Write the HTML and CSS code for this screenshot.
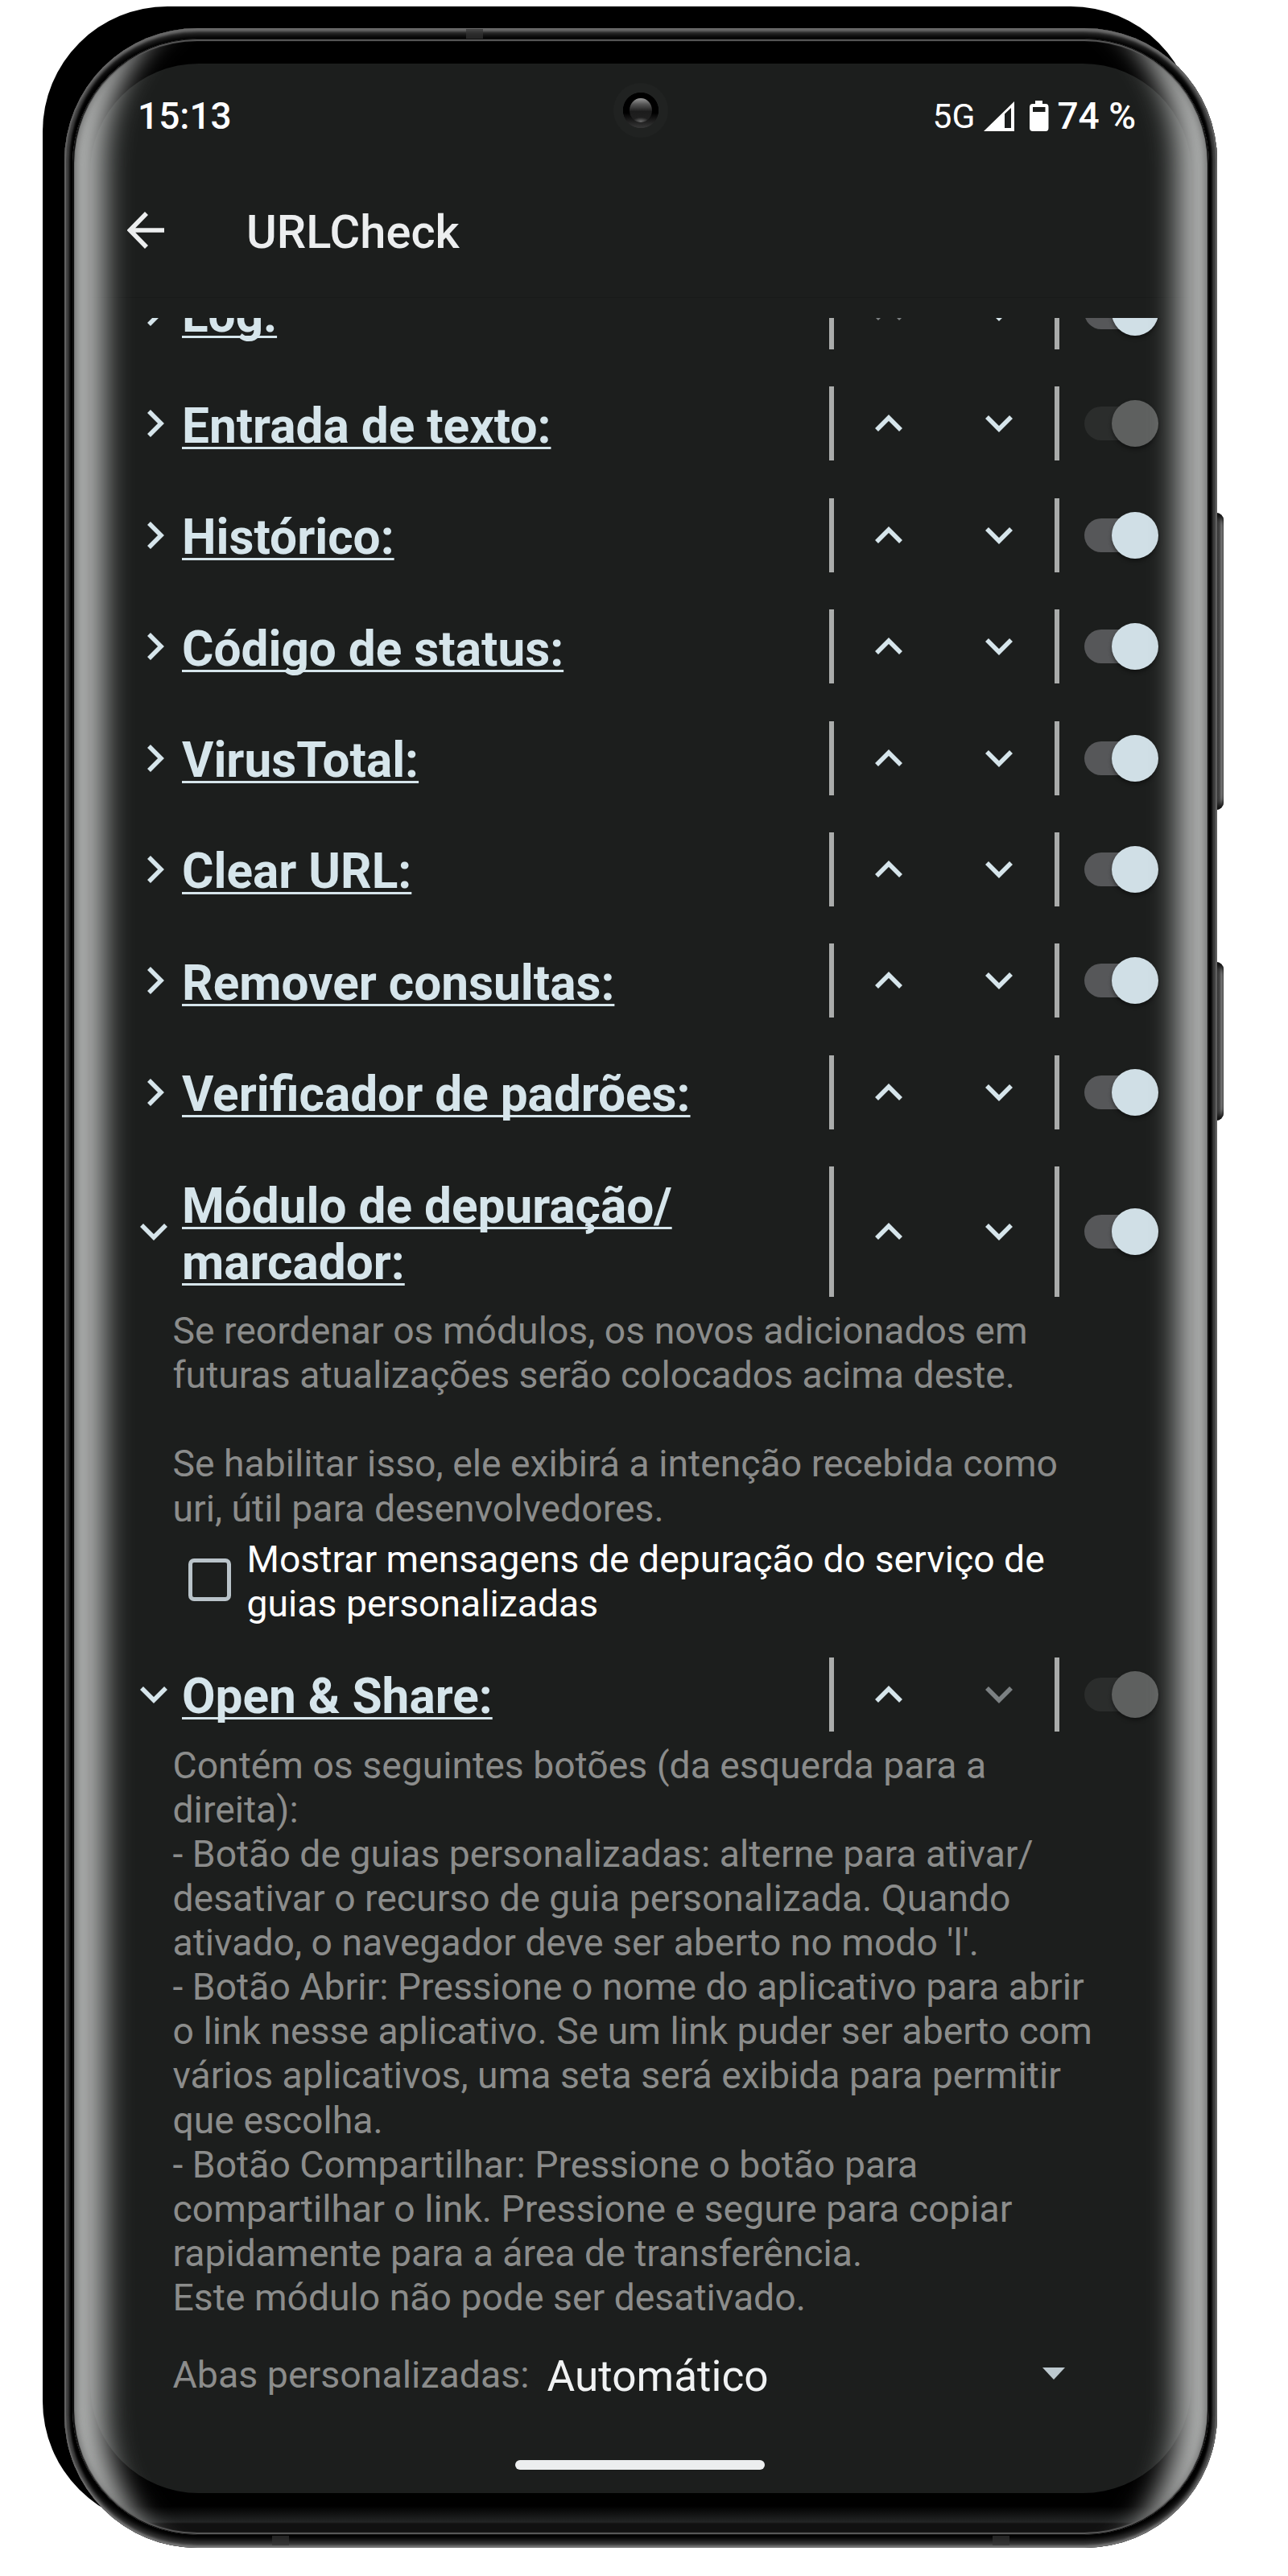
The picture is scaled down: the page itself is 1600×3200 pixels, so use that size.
FILE: index.html
```html
<!DOCTYPE html>
<html lang="pt">
<head>
<meta charset="utf-8">
<title>URLCheck</title>
<link rel="stylesheet" href="styles.css">
</head>
<body>
<svg class="defs" width="0" height="0">
  <symbol id="right" viewBox="0 0 34 34"><path d="M11 2 L26 17 L11 32" fill="none" stroke="currentColor" stroke-width="5.6"/></symbol>
  <symbol id="down" viewBox="0 0 34 22"><path d="M2 3 L17 18 L32 3" fill="none" stroke="currentColor" stroke-width="5.6"/></symbol>
  <symbol id="up" viewBox="0 0 34 22"><path d="M2 19 L17 4 L32 19" fill="none" stroke="currentColor" stroke-width="5.6"/></symbol>
</svg>
<div class="device">
  <div class="backing"></div>
  <div class="key key-volume"></div>
  <div class="key key-power"></div>
  <div class="body">
    <i class="antenna antenna-top"></i><i class="antenna antenna-bl"></i><i class="antenna antenna-br"></i>
    <div class="bezel">
      <main class="screen">
        <header class="status">
          <span class="clock">15:13</span>
          <span class="net">5G</span>
          <svg class="signal" viewBox="0 0 38 37"><path d="M0 37 L38 0 V37 Z M26 15.500 V33 H34 V8 Z" fill="#fff" fill-rule="evenodd"/></svg>
          <svg class="battery" viewBox="0 0 24 38"><path d="M7 0 H16 V4 H20 Q23.500 4 23.500 8 V34 Q23.500 38 20 38 H4 Q0 38 0 34 V8 Q0 4 4 4 H7 Z M4 8 V14 H19.500 V8 Z" fill="#fff" fill-rule="evenodd"/></svg>
          <span class="level">74 %</span>
        </header>
        <div class="appbar">
          <svg class="back" viewBox="0 0 46 46"><path d="M46 23 H4 M24 2 L3.500 23 L24 44" fill="none" stroke="#eceeef" stroke-width="5.6"/></svg>
          <h1>URLCheck</h1>
        </div>
        <div class="list">
          <div class="row"><svg class="tw"><use href="#right"/></svg><h2>Log:</h2><div class="move"><svg class="dim"><use href="#up"/></svg><svg><use href="#down"/></svg></div><span class="switch"></span></div>
          <div class="row"><svg class="tw"><use href="#right"/></svg><h2>Entrada de texto:</h2><div class="move"><svg><use href="#up"/></svg><svg><use href="#down"/></svg></div><span class="switch locked"></span></div>
          <div class="row"><svg class="tw"><use href="#right"/></svg><h2>Histórico:</h2><div class="move"><svg><use href="#up"/></svg><svg><use href="#down"/></svg></div><span class="switch"></span></div>
          <div class="row"><svg class="tw"><use href="#right"/></svg><h2>Código de status:</h2><div class="move"><svg><use href="#up"/></svg><svg><use href="#down"/></svg></div><span class="switch"></span></div>
          <div class="row"><svg class="tw"><use href="#right"/></svg><h2>VirusTotal:</h2><div class="move"><svg><use href="#up"/></svg><svg><use href="#down"/></svg></div><span class="switch"></span></div>
          <div class="row"><svg class="tw"><use href="#right"/></svg><h2>Clear URL:</h2><div class="move"><svg><use href="#up"/></svg><svg><use href="#down"/></svg></div><span class="switch"></span></div>
          <div class="row"><svg class="tw"><use href="#right"/></svg><h2>Remover consultas:</h2><div class="move"><svg><use href="#up"/></svg><svg><use href="#down"/></svg></div><span class="switch"></span></div>
          <div class="row"><svg class="tw"><use href="#right"/></svg><h2>Verificador de padrões:</h2><div class="move"><svg><use href="#up"/></svg><svg><use href="#down"/></svg></div><span class="switch"></span></div>
          <div class="row open tall"><svg class="tw"><use href="#down"/></svg><h2>Módulo de depuração/<br>marcador:</h2><div class="move"><svg><use href="#up"/></svg><svg><use href="#down"/></svg></div><span class="switch"></span></div>
          <p class="about">Se reordenar os módulos, os novos adicionados em<br>futuras atualizações serão colocados acima deste.<br><br>Se habilitar isso, ele exibirá a intenção recebida como<br>uri, útil para desenvolvedores.</p>
          <label class="option"><span class="box"></span><span>Mostrar mensagens de depuração do serviço de<br>guias personalizadas</span></label>
          <div class="row open"><svg class="tw"><use href="#down"/></svg><h2>Open &amp; Share:</h2><div class="move"><svg><use href="#up"/></svg><svg class="dim"><use href="#down"/></svg></div><span class="switch locked"></span></div>
          <p class="about">Contém os seguintes botões (da esquerda para a<br>direita):<br>- Botão de guias personalizadas: alterne para ativar/<br>desativar o recurso de guia personalizada. Quando<br>ativado, o navegador deve ser aberto no modo 'l'.<br>- Botão Abrir: Pressione o nome do aplicativo para abrir<br>o link nesse aplicativo. Se um link puder ser aberto com<br>vários aplicativos, uma seta será exibida para permitir<br>que escolha.<br>- Botão Compartilhar: Pressione o botão para<br>compartilhar o link. Pressione e segure para copiar<br>rapidamente para a área de transferência.<br>Este módulo não pode ser desativado.</p>
          <div class="select"><span class="name">Abas personalizadas:</span><span class="value">Automático</span><svg class="caret" viewBox="0 0 28 15"><path d="M0 0 H28 L14 15 Z" fill="#bdc9cf"/></svg></div>
        </div>
        <div class="home"></div>
      </main>
      <div class="camera"><span class="lens"></span></div>
      <div class="glow"></div>
    </div>
  </div>
</div>
</body>
</html>
```
FILE: styles.css
```css
* { box-sizing: border-box; }
body { margin: 0; background: #fff; font-family: Roboto, "Liberation Sans", sans-serif; }
h1, h2, p { margin: 0; }
.defs { position: absolute; }
.device { position: relative; width: 1600px; height: 3200px; overflow: hidden; padding: 35px 88px 35px 80px; }
.backing { position: absolute; left: 53px; top: 8px; width: 1432px; height: 3130px; border-radius: 155px; background: #000; }
.key { position: absolute; left: 1505px; width: 15px; border-radius: 0 9px 9px 0; background: linear-gradient(90deg, #333 40%, #444 65%, #8a8a8a 85%, #777); box-shadow: inset 0 8px 6px -2px #111, inset 0 -8px 6px -2px #111; }
.key-volume { top: 637px; height: 369px; }
.key-power { top: 1195px; height: 197px; }

.body {
  position: relative; height: 3130px; border-radius: 165px; padding: 13px 10px 16px; background: #000;
  box-shadow: inset 0 4px 3px #6a6a6a, inset 0 10px 6px -2px #333, inset 0 -3px 3px #7a7a7a, inset 0 -11px 6px -2px #3a3a3a, inset 2px 0 1px #707070, inset -2px 0 1px #707070, inset 7px 0 3px -1px #444, inset -7px 0 3px -1px #444;
}
.antenna { position: absolute; width: 21px; height: 12px; background: #333; opacity: .7; }
.antenna-top { left: 499px; top: 1px; }
.antenna-bl { left: 258px; bottom: 3px; }
.antenna-br { left: 1153px; bottom: 3px; }

.bezel {
  position: relative; height: 3101px; border-radius: 155px; overflow: hidden; padding: 31px 22px 50px;
  background: linear-gradient(#000 3065px, #232525 3085px, #111 3087px, #111);
}
.screen {
  height: 3018px; border-radius: 135px; background: #1c1e1d; overflow: hidden; color: #fff;
  display: flex; flex-direction: column;
}
.glow {
  position: absolute; inset: 0; border-radius: inherit;
  box-shadow: inset 0 0 0 1px #111, inset 0 3px 1px #5a5a5a, inset 0 -3px 1px #5a5a5a,
    inset 2px 0 1px #000, inset -2px 0 1px #000,
    inset 15px 0 10px -10px rgba(70,70,70,.6), inset -15px 0 10px -10px rgba(70,70,70,.6),
    inset 130px 0 34px -90px #adafae, inset -130px 0 34px -90px #adafae;
}

.status { display: flex; align-items: center; height: 130px; padding: 0 69px 0 59px; font-size: 46px; font-weight: 500; }
.clock { margin-right: auto; }
.net { font-size: 42.500px; font-weight: 400; margin-right: 11px; }
.signal { width: 38px; height: 37px; margin-right: 19px; }
.battery { width: 24px; height: 38px; margin-right: 10px; }

.appbar { display: flex; align-items: center; height: 161px; padding: 0 0 6px 46px; border-bottom: 1px solid #181a19; gap: 102px; }
.back { width: 46px; height: 46px; }
h1 { font-size: 57.800px; font-weight: 500; color: #eceeef; padding-top: 4px; }

.list { flex: 1; margin-top: 25px; overflow: hidden; padding-right: 29px; }
.row { display: flex; align-items: center; height: 92px; margin-bottom: 46.400px; color: #d6e5eb; padding-left: 62px; }
.row:first-child { margin-top: -53px; }
.row.tall { height: 162px; }
.row.open { margin-bottom: 0; }
.tw { width: 34px; height: 34px; margin-right: 18px; }
.open .tw { height: 22px; }
h2 { flex: 1; font-size: 60.300px; font-weight: 700; line-height: 70px; padding-top: 7px; text-decoration: underline; text-decoration-thickness: 3px; text-underline-offset: 5px; text-decoration-skip-ink: none; white-space: nowrap; }
.move { align-self: stretch; width: 286px; border: solid #aaacab; border-width: 0 6px; display: flex; align-items: center; gap: 103px; padding-left: 51px; }
.move svg { width: 34px; height: 22px; }
.dim { color: #7c8183; }
.switch { position: relative; width: 92px; height: 42px; margin-left: 31px; margin-right: 12px; flex: none; }
.switch::before { content: ""; position: absolute; inset: 0 14px 0 0; border-radius: 21px; background: #565759; }
.switch::after { content: ""; position: absolute; left: 34px; top: -8px; width: 58px; height: 58px; border-radius: 50%; background: #d0dfe6; box-shadow: 0 3px 5px rgba(0,0,0,.4); }
.locked::before { background: #2b2d2c; }
.locked::after { background: #5e605f; }
.about { padding-left: 102.500px; font-size: 46.320px; line-height: 55.100px; color: #8b8c8b; white-space: nowrap; margin-top: 15px; }
.option { display: flex; align-items: center; padding-left: 121.500px; gap: 20px; font-size: 46.320px; line-height: 55.100px; white-space: nowrap; margin: 8px 0 39px; }
.box { width: 53px; height: 53px; border: 5px solid #b9c3c9; border-radius: 7px; margin-top: -4px; }
.select { display: flex; align-items: baseline; padding-left: 102.500px; margin-top: 35px; font-size: 46.500px; color: #8b8c8b; white-space: nowrap; }
.value { position: relative; top: 4px; font-size: 53.200px; color: #f0f2f3; margin-left: 22px; }
.caret { width: 28px; height: 15px; margin-left: auto; margin-right: 128px; align-self: center; }
.home { width: 310px; height: 12px; border-radius: 6px; background: #eceeef; margin: 0 auto 29px; transform: translateX(-1px); }
.camera { position: absolute; left: 672px; top: 55px; width: 68px; height: 68px; border-radius: 50%; background: radial-gradient(circle closest-side, transparent 64%, #202221 66%), linear-gradient(#000 55%, #333 80%); display: grid; place-items: center; }
.lens { width: 28px; height: 30px; border-radius: 50%; background: radial-gradient(ellipse 10px 5px at 50% 96%, #666, transparent), linear-gradient(#999, #555 25%, #1c1c1c 55%, #222); }
```
